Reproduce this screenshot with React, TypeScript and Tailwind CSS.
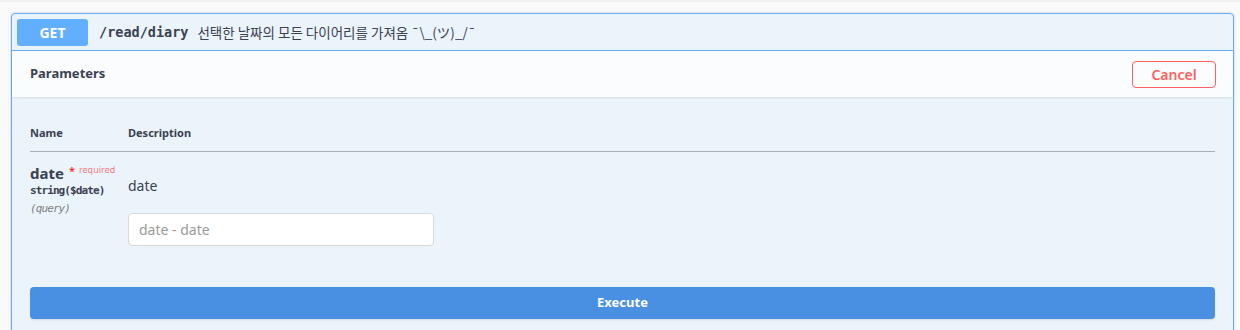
import React from "react";

export default function App() {
  const sans = { fontFamily: '"Noto Sans", "Noto Sans CJK KR", sans-serif' };
  const mono = { fontFamily: '"DejaVu Sans Mono", monospace' };
  return (
    <div className="w-[1240px] h-[330px] overflow-hidden bg-[#fafafa]" style={sans}>
      <div className="h-[2px] bg-[#f0f0f0]" />
      <div className="ml-[11px] mt-[11px] w-[1223px] border border-[#61affe] rounded-[4px] bg-[#ebf3fb] shadow-[0_0_3px_rgba(0,0,0,0.19)]">
        {/* summary */}
        <div className="flex items-center h-[37px] px-[5px] border-b border-[#61affe]">
          <div className="w-[71px] h-[27px] rounded-[3px] bg-[#61affe] text-white font-bold text-[14px] flex items-center justify-center">
            GET
          </div>
          <span className="ml-[11px] text-[13.5px] font-bold text-[#3b4151]" style={mono}>
            /read/diary
          </span>
          <span
            className="ml-[9px] text-[13.5px] text-[#3b4151]"
            style={{ fontFamily: '"Noto Sans CJK KR", "Noto Sans", sans-serif' }}
          >
            선택한 날짜의 모든 다이어리를 가져옴 ¯\_(ツ)_/¯
          </span>
        </div>
        {/* parameters header */}
        <div className="flex items-center justify-between h-[46px] pl-[18px] pr-[17px] bg-[#fbfcfe] shadow-[0_1px_2px_rgba(0,0,0,0.1)]">
          <span className="text-[13px] font-bold text-[#3b4151]">Parameters</span>
          <button className="w-[84px] h-[27px] border-[1.5px] border-[#ff6060] rounded-[4px] text-[#ff6060] font-semibold text-[14px] bg-transparent">
            Cancel
          </button>
        </div>
        {/* table */}
        <div className="px-[18px] pt-[28px]">
          <div className="flex h-[27px] border-b border-[#a7afbd] text-[11px] font-bold text-[#3b4151]">
            <div className="w-[98px]">Name</div>
            <div>Description</div>
          </div>
          <div className="flex pt-[11px]">
            <div className="w-[98px]">
              <div className="flex items-start">
                <span className="text-[15px] font-bold text-[#3b4151] leading-[20px]">date</span>
                <span className="ml-[5px] text-[#ff0000] text-[11px] leading-[14px] mt-[1px]">*</span>
                <span className="ml-[4px] text-[9px] text-[rgba(255,0,0,0.55)] leading-[14px]">required</span>
              </div>
              <div className="text-[11px] font-bold text-[#3b4151] leading-[18px] mt-[-1px] tracking-[-0.9px]" style={mono}>
                string($date)
              </div>
              <div className="text-[11px] italic text-[#808080] leading-[18px] tracking-[-0.9px]" style={mono}>
                (query)
              </div>
            </div>
            <div>
              <div className="text-[14px] text-[#3b4151] mt-[13px] leading-[20px]">date</div>
              <div className="mt-[17px] w-[306px] h-[33px] bg-white border border-[#d9d9d9] rounded-[4px] flex items-center px-[10px] text-[14px] text-[#9a9a9a]">
                date - date
              </div>
            </div>
          </div>
          <div className="pt-[41px] pb-[16px]">
            <button className="w-full h-[32px] rounded-[4px] bg-[#4990e2] text-white font-bold text-[13px] shadow-[0_1px_2px_rgba(0,0,0,0.1)]">
              Execute
            </button>
          </div>
        </div>
      </div>
    </div>
  );
}
